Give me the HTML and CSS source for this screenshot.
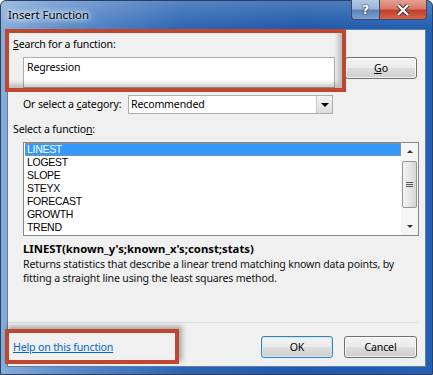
FILE: index.html
```html
<!DOCTYPE html>
<html>
  <head>
    <title>Insert Function</title>
    <link rel="stylesheet" href="styles.css">
  </head>
  <body>
    <div class="window">
      <div class="titlebar">
        <span class="title">Insert Function</span>
        <div class="caption-buttons">
          <div class="cap-btn cap-help">?</div>
          <div class="cap-btn cap-close">
            <svg width="14" height="12" viewBox="0 0 14 12">
              <path d="M2 1 L12 11 M12 1 L2 11" stroke="#3b2a2a" stroke-width="4" />
              <path d="M2 1 L12 11 M12 1 L2 11" stroke="#ffffff" stroke-width="2.4" />
            </svg>
          </div>
        </div>
      </div>

      <div class="client">
        <div class="label pl-5 pt-7"><u>S</u>earch for a function:</div>
        <div class="search-row">
          <div class="search-input">Regression</div>
          <div class="btn btn-go"><u>G</u>o</div>
        </div>

        <div class="category-row">
          <span class="category-label">Or select a <u>c</u>ategory:</span>
          <div class="combo">
            <span class="combo-text">Recommended</span>
            <span class="combo-drop"><i class="tri-down"></i></span>
          </div>
        </div>

        <div class="label pl-5 mt-8">Select a functio<u>n</u>:</div>
        <div class="listbox">
          <ul class="items">
            <li class="selected">LINEST</li>
            <li>LOGEST</li>
            <li>SLOPE</li>
            <li>STEYX</li>
            <li>FORECAST</li>
            <li>GROWTH</li>
            <li>TREND</li>
          </ul>
          <div class="scrollbar">
            <div class="sb-arrow"><i class="tri-up"></i></div>
            <div class="sb-thumb">
              <span class="grip"></span>
              <span class="grip"></span>
              <span class="grip"></span>
            </div>
            <div class="sb-track"></div>
            <div class="sb-arrow"><i class="tri-down small"></i></div>
          </div>
        </div>

        <div class="signature">LINEST(known_y's;known_x's;const;stats)</div>
        <p class="description">
          Returns statistics that describe a linear trend matching known data points, by
          fitting a straight line using the least squares method.
        </p>

        <div class="separator"></div>
        <div class="footer">
          <a class="help-link" href="#">Help on this function</a>
          <div class="btn btn-default">OK</div>
          <div class="btn btn-cancel">Cancel</div>
        </div>
      </div>

      <!-- red annotation boxes drawn over the dialog -->
      <div class="callout callout-search"></div>
      <div class="callout callout-help"></div>
    </div>
  </body>
</html>
```

FILE: styles.css
```css
html,
body {
  margin: 0;
  padding: 0;
}
body {
  width: 433px;
  height: 375px;
  overflow: hidden;
  font-family: "Noto Sans", "Open Sans", sans-serif;
  font-size: 10.6px;
  letter-spacing: -0.17px;
  color: #000;
}
u {
  text-decoration: underline;
}

.window {
  position: relative;
  width: 433px;
  height: 375px;
  box-sizing: border-box;
  border: 1px solid #2a3f64;
  border-radius: 6px 6px 0 0;
  background:
    linear-gradient(180deg, rgba(255, 255, 255, 0.2) 0px, rgba(255, 255, 255, 0) 28px),
    linear-gradient(90deg, #86acd9 0%, #5a8bca 16%, #2d65b3 42%, #1f59aa 70%, #2360b3 100%);
  display: flex;
  flex-direction: column;
}

.titlebar {
  height: 28px;
  display: flex;
  align-items: flex-start;
  padding-left: 7px;
  padding-right: 5px;
}
.title {
  margin-top: 6px;
  line-height: 16px;
  font-size: 11.4px;
  letter-spacing: 0;
  color: #000;
  text-shadow: 0 0 6px #e8f1fb, 0 0 3px #e8f1fb, 0 0 8px #ffffff;
}
.caption-buttons {
  margin-left: auto;
  display: flex;
  margin-top: -1px;
}
.cap-btn {
  height: 20px;
  box-sizing: border-box;
  border: 1px solid #3b4b66;
  border-top: none;
  display: flex;
  align-items: center;
  justify-content: center;
}
.cap-help {
  width: 28px;
  border-right: none;
  border-radius: 0 0 0 4px;
  background: linear-gradient(180deg, #b4c8e2 0%, #9db5d6 45%, #5b82b8 55%, #7fa3cf 100%);
  color: #fff;
  font-family: "DejaVu Sans", sans-serif;
  font-weight: bold;
  font-size: 13px;
  text-shadow: 0 0 2px #1d2c44, 0 0 1px #1d2c44;
}
.cap-close {
  width: 48px;
  border-radius: 0 0 4px 0;
  background: linear-gradient(180deg, #e5a193 0%, #d77a68 45%, #c2402b 55%, #d6634b 100%);
}

.client {
  flex: 1;
  margin: 0 6px 7px 6px;
  background: #f0f0f0;
  border: 1px solid #5d7ea9;
  display: flex;
  flex-direction: column;
}

.label {
  line-height: 15px;
}
.pl-5 {
  padding-left: 5px;
}
.pt-7 {
  padding-top: 7px;
}
.mt-8 {
  margin-top: 8px;
}

.search-row {
  display: flex;
  align-items: flex-start;
  margin-top: 5px;
  padding-left: 15px;
}
.search-input {
  width: 312px;
  height: 31px;
  box-sizing: border-box;
  background: #fff;
  border: 1px solid #abadb3;
  padding: 2px 3px;
  line-height: 15px;
}
.btn {
  box-sizing: border-box;
  height: 22px;
  border: 1px solid #707070;
  border-radius: 3px;
  background: linear-gradient(180deg, #f2f2f2 0%, #ebebeb 48%, #dddddd 52%, #cfcfcf 100%);
  box-shadow: inset 0 0 0 1px rgba(255, 255, 255, 0.7);
  display: flex;
  align-items: center;
  justify-content: center;
  line-height: 15px;
}
.btn-go {
  width: 72px;
  margin-left: 10px;
}

.category-row {
  display: flex;
  align-items: center;
  margin-top: 7px;
  padding-left: 15px;
}
.category-label {
  width: 105px;
  line-height: 15px;
  white-space: nowrap;
}
.combo {
  width: 205px;
  height: 19px;
  box-sizing: border-box;
  background: #fff;
  border: 1px solid #abadb3;
  display: flex;
  align-items: stretch;
}
.combo-text {
  flex: 1;
  padding-left: 2px;
  line-height: 17px;
}
.combo-drop {
  width: 15px;
  border-left: 1px solid #c5c5c5;
  background: linear-gradient(180deg, #f4f4f4, #dcdcdc);
  display: flex;
  align-items: center;
  justify-content: center;
}
.tri-down {
  width: 0;
  height: 0;
  border-left: 4px solid transparent;
  border-right: 4px solid transparent;
  border-top: 4px solid #000;
}
.tri-down.small {
  border-left-width: 3px;
  border-right-width: 3px;
  border-top: 3px solid #333;
}
.tri-up {
  width: 0;
  height: 0;
  border-left: 3px solid transparent;
  border-right: 3px solid transparent;
  border-bottom: 3px solid #333;
}

.listbox {
  margin: 5px 0 0 15px;
  width: 396px;
  height: 94px;
  box-sizing: border-box;
  border: 1px solid #828790;
  background: #fff;
  display: flex;
}
.items {
  list-style: none;
  margin: 0;
  padding: 0;
  flex: 1;
  font-family: "Liberation Sans", Arial, sans-serif;
  font-size: 10.5px;
  letter-spacing: -0.3px;
}
.items li {
  height: 13px;
  line-height: 13px;
  padding-left: 2px;
  margin-left: 1px;
}
.items li.selected {
  background: #3399ff;
  color: #fff;
  outline: 1px dotted #c98a3c;
  outline-offset: -1px;
}
.scrollbar {
  width: 17px;
  display: flex;
  flex-direction: column;
  background: #f5f5f5;
}
.sb-arrow {
  height: 17px;
  display: flex;
  align-items: center;
  justify-content: center;
}
.sb-thumb {
  height: 47px;
  margin: 1px 1px 0 1px;
  box-sizing: border-box;
  border: 1px solid #979797;
  border-radius: 2px;
  background: linear-gradient(90deg, #f3f3f3 0%, #e6e6e6 50%, #d6d6d6 100%);
  display: flex;
  flex-direction: column;
  align-items: center;
  justify-content: center;
  gap: 1px;
}
.grip {
  width: 7px;
  height: 1px;
  background: #555;
}
.sb-track {
  flex: 1;
}

.signature {
  margin: 5px 0 0 15px;
  font-size: 11.3px;
  letter-spacing: 0;
  font-weight: bold;
  line-height: 15px;
}
.description {
  margin: 1px 0 0 15px;
  line-height: 14px;
  color: #111;
}

.separator {
  margin-top: auto;
  margin-right: 7px;
  height: 1px;
  background: #d5dfe5;
}
.footer {
  display: flex;
  align-items: center;
  padding: 13px 8px 8px 5px;
}
.help-link {
  color: #0066cc;
  text-decoration: underline;
  line-height: 15px;
  margin-right: auto;
}
.btn-default {
  width: 72px;
  border-color: #3c7fb1;
  box-shadow: inset 0 0 0 1px #c5e8f8;
}
.btn-cancel {
  width: 73px;
  margin-left: 11px;
}

.callout {
  position: absolute;
  box-sizing: border-box;
  border: 4px solid #c0472f;
}
.callout-search {
  left: 4px;
  top: 28px;
  width: 341px;
  height: 63px;
  box-shadow: inset -4px -4px 5px rgba(0, 0, 0, 0.22);
}
.callout-help {
  left: 4px;
  top: 328px;
  width: 174px;
  height: 35px;
  box-shadow: 3px -3px 5px rgba(0, 0, 0, 0.3);
}
```
